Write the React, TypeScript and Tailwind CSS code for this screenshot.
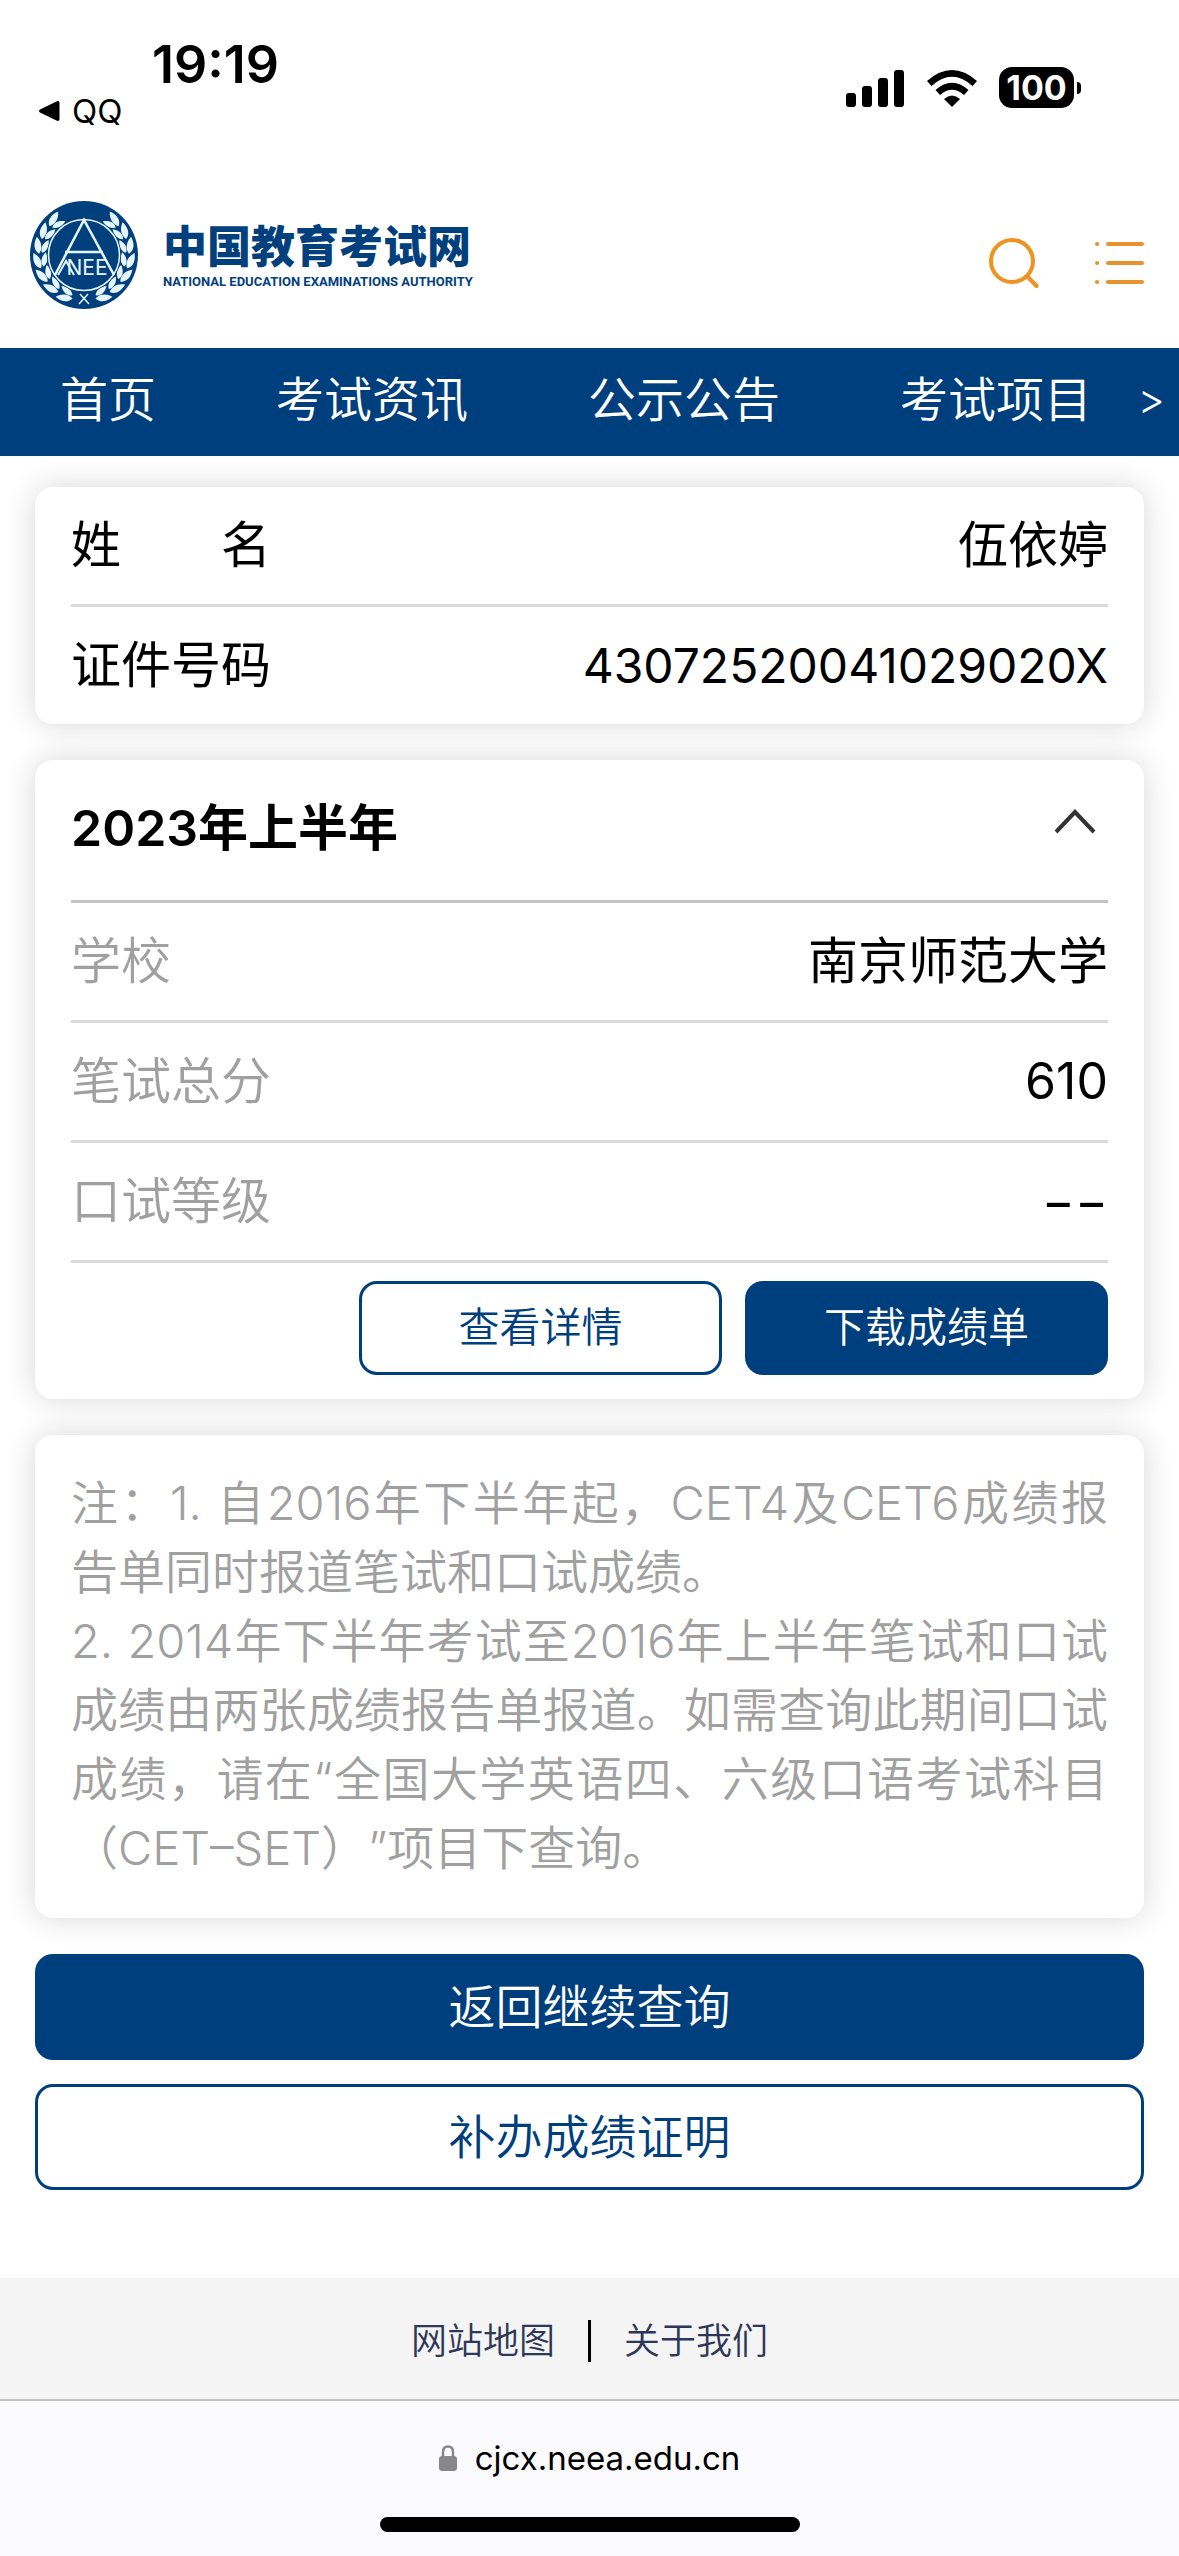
import { useState } from 'react'

interface ResultRow {
  label: string
  value: string
}

const navItems = ['首页', '考试资讯', '公示公告', '考试项目']

const results: ResultRow[] = [
  { label: '学校', value: '南京师范大学' },
  { label: '笔试总分', value: '610' },
  { label: '口试等级', value: '−−' },
]

const noteLines = [
  '注：1. 自2016年下半年起，CET4及CET6成绩报',
  '告单同时报道笔试和口试成绩。',
  '2. 2014年下半年考试至2016年上半年笔试和口试',
  '成绩由两张成绩报告单报道。如需查询此期间口试',
  '成绩，请在“全国大学英语四、六级口语考试科目',
  '（CET–SET）”项目下查询。',
]

const leafAngles = [16, 36, 55, 74, 93, 112, 131]
const leaf = 'M0 0 C5 -4 5 -11 0 -18 C-5 -11 -4 -4 0 0 Z'

function Laurel() {
  return (
    <>
      {leafAngles.map((angle) => (
        <g key={angle} transform={`rotate(${-angle} 54 54) translate(54 98)`}>
          <path d={leaf} transform="translate(0 -2) rotate(66) scale(0.8)" />
          <path d={leaf} transform="translate(-1 1) rotate(100) scale(0.95)" />
        </g>
      ))}
    </>
  )
}

function Emblem() {
  return (
    <svg viewBox="0 0 108 108" className="size-[108px] shrink-0" aria-hidden="true">
      <circle cx="54" cy="54" r="54" fill="#02407d" />
      <g fill="#e6f6ff">
        <Laurel />
        <g transform="translate(108 0) scale(-1 1)">
          <Laurel />
        </g>
      </g>
      <circle cx="54" cy="54" r="37" fill="#02407d" />
      <circle cx="54" cy="54" r="35.5" fill="#02407d" stroke="#e6f6ff" strokeWidth="1.5" />
      <path d="M25 74 L54 19 L84 74 M35 51 H73" fill="none" stroke="#e6f6ff" strokeWidth="2.5" />
      <path d="M28 74 L36 60 L44 74" fill="none" stroke="#e6f6ff" strokeWidth="2" />
      <path d="M49 103 L58 93 M59 103 L50 93" stroke="#e6f6ff" strokeWidth="1.5" />
      <text x="57" y="74" textAnchor="middle" fill="#e6f6ff" fontSize="21" fontFamily="Inter, sans-serif">
        NEE
      </text>
    </svg>
  )
}

function StatusBar() {
  return (
    <div className="flex h-[180px] items-start justify-between pl-[38px] pr-[98px] font-semibold text-black">
      <div className="pt-[35px]">
        <div className="pl-[114px] text-[52px] leading-[60px]">19:19</div>
        <a href="#" className="flex items-center gap-3 text-[33px] font-normal leading-[32px]">
          <svg viewBox="0 0 22 22" className="size-[22px]" aria-hidden="true">
            <path d="M2 9.5 L19 1.2 Q21.500 0.500 21.500 3 V19 Q21.500 21.500 19 20.800 L2 12.500 Q0 11 2 9.500 Z" />
          </svg>
          QQ
        </a>
      </div>
      <div className="flex items-center pt-[67px]">
        <svg viewBox="0 0 58 38" className="mr-[23px] h-[38px] w-[58px]" aria-hidden="true">
          <rect x="0" y="24" width="10" height="14" rx="3" />
          <rect x="16" y="17" width="10" height="21" rx="3" />
          <rect x="32" y="9" width="10" height="29" rx="3" />
          <rect x="48" y="1" width="10" height="37" rx="3" />
        </svg>
        <svg viewBox="0 0 50 38" className="mr-[22px] h-[38px] w-[50px]" aria-hidden="true">
          <path d="M0 12 Q25 -10 50 12 L45.500 17 Q25 -1.500 4.500 17 Z" />
          <path d="M8.500 21 Q25 6.500 41.500 21 L37 26 Q25 15.500 13 26 Z" />
          <path d="M17 30 Q25 23 33 30 L25 38 Z" />
        </svg>
        <div className="flex h-[41px] w-[75px] items-center justify-center rounded-[13px] bg-black text-[34px] font-bold text-white">
          100
        </div>
        <div className="ml-[3px] h-3 w-1 rounded-r-full bg-black" />
      </div>
    </div>
  )
}

function SiteHeader() {
  return (
    <header className="flex h-[168px] items-start justify-between pl-[30px] pr-[34px] pt-[21px]">
      <a href="#" className="flex gap-[25px] text-[#02407d]">
        <Emblem />
        <div className="pt-6">
          <div className="text-[44px] font-black leading-[44px]">中国教育考试网</div>
          <div className="pt-[3px] font-[Roboto,sans-serif] text-[13px] font-bold leading-[20px] whitespace-nowrap">
            NATIONAL EDUCATION EXAMINATIONS AUTHORITY
          </div>
        </div>
      </a>
      <div className="flex gap-[56px] pt-[37px]">
        <button type="button" aria-label="搜索">
          <svg viewBox="0 0 50 50" className="size-[50px]" fill="none" stroke="#ee9322" strokeWidth="4" strokeLinecap="round">
            <circle cx="23" cy="23" r="21" />
            <path d="M38 38 L47.500 48" />
          </svg>
        </button>
        <button type="button" aria-label="菜单">
          <svg viewBox="0 0 50 50" className="size-[50px]" fill="none" stroke="#e8912f" strokeWidth="4" strokeLinecap="round">
            <path d="M2 6 H2.100 M13 6 H47 M2 25 H2.100 M13 25 H47 M2 44 H2.100 M13 44 H47" />
          </svg>
        </button>
      </div>
    </header>
  )
}

function NavBar() {
  return (
    <nav className="flex h-[108px] items-center justify-between bg-[#003f7d] pb-1 pr-[14px] text-white">
      <div className="flex">
        {navItems.map((item) => (
          <a key={item} href="#" className="px-[60px] text-[48px] leading-[72px] font-[350] whitespace-nowrap">
            {item}
          </a>
        ))}
      </div>
      <a href="#" className="-ml-[60px] pb-1 text-[42px] font-[350]">&gt;</a>
    </nav>
  )
}

const cardClass = 'rounded-[18px] bg-white px-9 shadow-[0_0_30px_rgba(0,0,0,0.16)]'
const rowClass = 'flex h-[120px] items-center justify-between border-b-3 border-[#d9d9d9] text-[50px]'

export default function App() {
  const [open, setOpen] = useState(true)

  return (
    <div className="flex min-h-screen flex-col bg-white font-[Inter,'Noto_Sans_CJK_SC',sans-serif] text-black">
      <StatusBar />
      <SiteHeader />
      <NavBar />

      <main className="flex flex-col px-[35px] pt-[31px] pb-[88px]">
        <dl className={cardClass}>
          <div className={rowClass}>
            <dt className="whitespace-pre">姓　　名</dt>
            <dd>伍依婷</dd>
          </div>
          <div className="flex h-[117px] items-center justify-between text-[50px]">
            <dt>证件号码</dt>
            <dd className="text-[48px]">43072520041029020X</dd>
          </div>
        </dl>

        <section className={`${cardClass} mt-9`}>
          <button
            type="button"
            aria-expanded={open}
            onClick={() => setOpen(!open)}
            className="flex h-[143px] w-full items-center justify-between border-b-3 border-[#c4c4c4] pr-3 pb-1 text-[50px] font-semibold"
          >
            <span>2023年上半年</span>
            <svg
              viewBox="0 0 42 42"
              className={open ? 'size-[42px]' : 'size-[42px] rotate-180'}
              fill="none"
              stroke="#333"
              strokeWidth="4"
            >
              <path d="M2 25 L21 5 L40 25" />
            </svg>
          </button>
          {open && (
            <>
              <dl>
                {results.map((row) => (
                  <div key={row.label} className={rowClass}>
                    <dt className="font-[350] text-[#a0a0a0]">{row.label}</dt>
                    <dd>{row.value}</dd>
                  </div>
                ))}
              </dl>
              <div className="flex justify-end gap-[23px] pt-[18px] pb-6 text-[41px] font-[350]">
                <button type="button" className="h-[94px] w-[35%] rounded-[18px] border-3 border-[#003f7d] text-[#003f7d]">
                  查看详情
                </button>
                <button type="button" className="h-[94px] w-[35%] rounded-[18px] bg-[#003f7d] text-white">
                  下载成绩单
                </button>
              </div>
            </>
          )}
        </section>

        <section className={`${cardClass} mt-9 pt-[33px] pb-9 text-[47px] leading-[69px] font-[350] text-[#a0a0a0] [text-spacing-trim:space-all]`}>
          {noteLines.map((line, i) => (
            <p
              key={line}
              className={i === 1 || i === 5 ? 'whitespace-nowrap' : 'text-justify [text-align-last:justify] whitespace-nowrap'}
            >
              {line}
            </p>
          ))}
        </section>

        <button type="button" className="mt-9 h-[106px] rounded-[18px] bg-[#003f7d] text-[47px] font-[350] text-white">
          返回继续查询
        </button>
        <button type="button" className="mt-6 h-[106px] rounded-[18px] border-3 border-[#003f7d] text-[47px] font-[350] text-[#003f7d]">
          补办成绩证明
        </button>
      </main>

      <footer className="flex h-[121px] items-center justify-center gap-[33px] bg-[#f4f4f5] pt-1 text-[36px] font-[350] text-[#2e3757]">
        <a href="#">网站地图</a>
        <span className="h-[42px] w-[3px] bg-black" />
        <a href="#">关于我们</a>
      </footer>

      <div className="flex flex-1 flex-col items-center justify-between border-t-2 border-[#c3c3c5] bg-[#fbfbfd] pt-[33px] pb-6">
        <div className="flex items-center gap-[18px] text-[33px] leading-[48px]">
          <svg viewBox="0 0 18 26" className="h-[26px] w-[18px]" aria-hidden="true">
            <rect x="0" y="11" width="18" height="15" rx="3" fill="#88888b" />
            <path d="M4 12 V7 Q4 1.500 9 1.500 Q14 1.500 14 7 V12" fill="none" stroke="#88888b" strokeWidth="2.5" />
          </svg>
          cjcx.neea.edu.cn
        </div>
        <div className="h-[15px] w-[420px] rounded-full bg-black" />
      </div>
    </div>
  )
}
